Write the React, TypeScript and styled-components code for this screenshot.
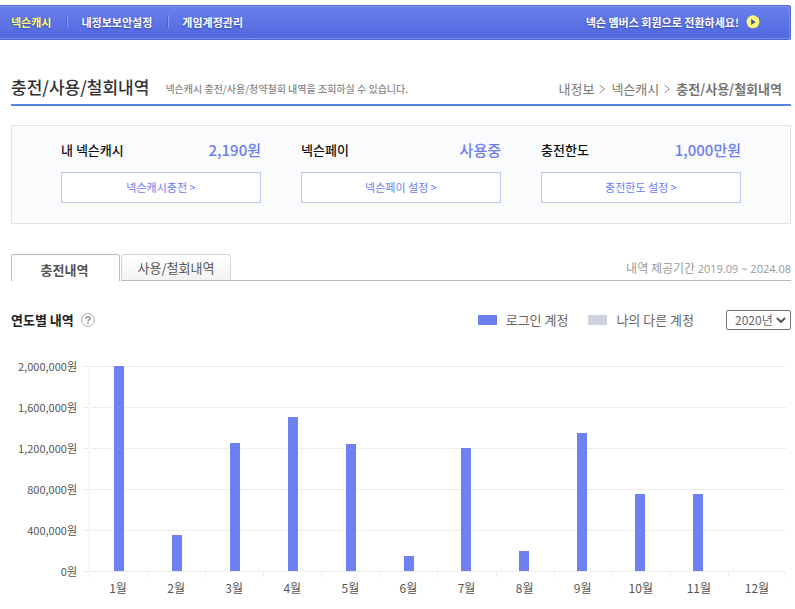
import React from 'react';
import styled, { createGlobalStyle } from 'styled-components';

const GlobalStyle = createGlobalStyle`
  *, *::before, *::after { box-sizing: border-box; }
  body {
    margin: 0;
    background: #fff;
    color: #666;
    font-family: "Noto Sans CJK KR", "Liberation Sans", sans-serif;
    font-size: 13px;
    line-height: 20px;
  }
  a { color: inherit; text-decoration: none; }
  h1, h2, h3, p, ul, ol { margin: 0; padding: 0; }
  ul, ol { list-style: none; }
  button, select { font-family: inherit; cursor: pointer; }
`;

const Page = styled.div`
  padding: 5px 4px 10px 0;
`;

const NavBar = styled.nav`
  display: flex;
  align-items: center;
  justify-content: space-between;
  height: 35px;
  padding: 0 30px 2px 11px;
  border: solid #5068d8;
  border-width: 1px 1px 1px 0;
  border-radius: 0 2px 2px 0;
  background: linear-gradient(#687feb, #5268df);
  box-shadow: inset 0 1px 0 #7a92f0, inset -1px -1px 0 #7389ee;
  color: #fff;
  font-size: 11px;
  font-weight: 700;
  text-shadow: 0 1px 2px #3446a8;
`;

const NavList = styled.ul`
  display: flex;
  align-items: center;
`;

const NavItem = styled.li<{ $active?: boolean }>`
  display: flex;
  align-items: center;
  color: ${(p) => (p.$active ? '#ffff66' : '#fff')};

  &:not(:first-child)::before {
    content: '';
    width: 2px;
    height: 13px;
    margin: 0 13px 0 15px;
    border-left: 1px solid #4a62d4;
    background: #7d9cf8;
  }
`;

const MemberLink = styled.a`
  display: flex;
  align-items: center;
  gap: 7px;
`;

const Content = styled.main`
  padding-left: 11px;
`;

const PageHeader = styled.header`
  display: flex;
  align-items: center;
  height: 66px;
  padding: 30px 9px 0 0;
  border-bottom: 2px solid #5a84e2;
`;

const PageTitle = styled.h1`
  color: #333;
  font-size: 17px;
  font-weight: 500;
  line-height: 24px;
  white-space: nowrap;
`;

const PageNote = styled.p`
  margin: 4px 0 0 16px;
  color: #888;
  font-size: 10px;
  font-weight: 500;
  white-space: nowrap;
`;

const Breadcrumb = styled.ol`
  display: flex;
  gap: 5px;
  margin: 4px 0 0 auto;
  color: #777;
  white-space: nowrap;
`;

const Crumb = styled.li<{ $current?: boolean }>`
  display: flex;
  align-items: center;
  gap: 4px;
  font-weight: ${(p) => (p.$current ? 700 : 400)};
`;

const Summary = styled.section`
  display: grid;
  grid-template-columns: repeat(3, 1fr);
  gap: 40px;
  margin-top: 19px;
  padding: 12px 49px 20px;
  border: 1px solid #e2e3e6;
  background: #fafbfd;
`;

const SummaryHead = styled.div`
  display: flex;
  align-items: center;
  justify-content: space-between;
  height: 24px;
  margin-bottom: 10px;
`;

const SummaryTitle = styled.h2`
  color: #111;
  font-size: 13px;
  font-weight: 500;
`;

const SummaryValue = styled.strong`
  color: #6b7df0;
  font-size: 15px;
  font-weight: 500;
`;

const SummaryButton = styled.button`
  display: block;
  width: 100%;
  height: 31px;
  padding: 0 0 2px;
  border: 1px solid #bfc6ef;
  background: #fff;
  color: #6b7df0;
  font-size: 11px;
  line-height: 20px;
`;

const TabRow = styled.div`
  display: flex;
  align-items: flex-end;
  height: 27px;
  margin-top: 30px;
`;

const TabList = styled.div`
  display: flex;
  height: 100%;
`;

const Tab = styled.button<{ $active?: boolean }>`
  width: ${(p) => (p.$active ? '109px' : '110px')};
  padding: ${(p) => (p.$active ? '3px 2px 0 0' : '0')};
  border: 1px solid ${(p) => (p.$active ? '#bbb' : '#d4d4d4')};
  border-bottom: ${(p) => (p.$active ? '0' : '1px solid #bbb')};
  border-radius: 3px 3px 0 0;
  background: ${(p) => (p.$active ? '#fff' : 'linear-gradient(#fff, #f3f3f3)')};
  color: #555;
  font-size: 13px;
  font-weight: ${(p) => (p.$active ? 700 : 400)};
  line-height: 20px;

  &:not(:first-child) { margin-left: 1px; }
`;

const Period = styled.p`
  flex: 1;
  height: 100%;
  padding-top: 4px;
  border-bottom: 1px solid #bbb;
  color: #999;
  font-size: 12px;
  text-align: right;
`;

const PeriodDates = styled.span`
  font-family: "Open Sans", sans-serif;
  font-size: 11px;
`;

const ChartHeader = styled.div`
  display: flex;
  align-items: center;
  margin-top: 29px;
`;

const ChartTitle = styled.h2`
  color: #222;
  font-size: 13px;
  font-weight: 700;
`;

const HelpButton = styled.button`
  display: flex;
  margin-left: 7px;
  padding: 0;
  border: 0;
  background: none;
`;

const Legend = styled.ul`
  display: flex;
  gap: 20px;
  margin-left: auto;
`;

const LegendItem = styled.li<{ $color: string }>`
  display: flex;
  align-items: center;
  gap: 9px;
  color: #666;

  &::before {
    content: '';
    width: 19px;
    height: 10px;
    background: ${(p) => p.$color};
  }
`;

const YearField = styled.label`
  display: grid;
  align-items: center;
  width: 65px;
  margin-left: 32px;
`;

const YearSelect = styled.select`
  grid-area: 1 / 1;
  appearance: none;
  width: 100%;
  height: 20px;
  padding: 0 0 0 8px;
  border: 1px solid #767676;
  border-radius: 2px;
  background: #fff;
  color: #666;
  font-size: 12px;
  line-height: 18px;
`;

const SelectArrow = styled.svg`
  grid-area: 1 / 1;
  justify-self: end;
  margin-right: 5px;
  pointer-events: none;
`;

const Chart = styled.section`
  display: grid;
  grid-template-columns: 66px 1fr;
  column-gap: 6px;
  margin-top: 26px;
  padding-right: 5px;
  color: #555;
`;

const AmountAxis = styled.ul`
  display: flex;
  flex-direction: column;
  justify-content: space-between;
  height: 225px;
  font-size: 11px;
  text-align: right;
`;

const Plot = styled.div`
  display: grid;
  grid-template-rows: 206px auto;
  padding-top: 10px;
`;

const GridLines = styled.div`
  grid-area: 1 / 1;
  background: repeating-linear-gradient(#ededed 0 1px, transparent 1px 41px);
`;

const Bars = styled.div`
  grid-area: 1 / 1;
  display: grid;
  grid-template-columns: repeat(12, 1fr);
  align-items: end;
  justify-items: center;
  margin: 0 1px 0 5px;
  padding-bottom: 1px;
  border-left: 2px solid #f6f6f6;
`;

const Bar = styled.div`
  width: 10px;
  background: #6e80f2;
`;

const Months = styled.ol`
  display: grid;
  grid-template-columns: repeat(12, 1fr);
  margin-left: 6px;
  font-size: 12px;
  text-align: center;
`;

const Month = styled.li`
  display: flex;
  flex-direction: column;

  &::before {
    content: '';
    height: 5px;
    margin-bottom: 1px;
    border-left: 1px solid #ededed;
  }

  &:last-child::before { border-right: 1px solid #ededed; }
`;

const navItems = ['넥슨캐시', '내정보보안설정', '게임계정관리'];

const summaries = [
  { title: '내 넥슨캐시', value: '2,190원', action: '넥슨캐시충전 >' },
  { title: '넥슨페이', value: '사용중', action: '넥슨페이 설정 >' },
  { title: '충전한도', value: '1,000만원', action: '충전한도 설정 >' },
];

const MAX_AMOUNT = 2000000;
const amounts = [2000000, 1600000, 1200000, 800000, 400000, 0];
const monthly = [
  2000000, 350000, 1250000, 1500000, 1240000, 150000,
  1200000, 200000, 1350000, 750000, 750000, 0,
];

const Chevron = () => (
  <svg width="8" height="10" viewBox="0 0 8 10" aria-hidden="true">
    <path d="M1.5 1L6.5 5L1.5 9" fill="none" stroke="#888" />
  </svg>
);

export default function App() {
  return (
    <>
      <GlobalStyle />
      <Page>
        <NavBar>
          <NavList>
            {navItems.map((item, i) => (
              <NavItem key={item} $active={i === 0}>
                <a href="#">{item}</a>
              </NavItem>
            ))}
          </NavList>
          <MemberLink href="#">
            넥슨 멤버스 회원으로 전환하세요!
            <svg width="14" height="14" viewBox="0 0 14 14" aria-hidden="true">
              <circle cx="7" cy="7.5" r="6.5" fill="#3f51b5" opacity="0.5" />
              <circle cx="7" cy="6.8" r="6.5" fill="#fdf67c" />
              <path d="M5.2 4L9.7 7L5.2 10Z" fill="#4a5590" />
            </svg>
          </MemberLink>
        </NavBar>
        <Content>
          <PageHeader>
            <PageTitle>충전/사용/철회내역</PageTitle>
            <PageNote>넥슨캐시 충전/사용/청약철회 내역을 조회하실 수 있습니다.</PageNote>
            <Breadcrumb>
              <Crumb><a href="#">내정보</a><Chevron /></Crumb>
              <Crumb><a href="#">넥슨캐시</a><Chevron /></Crumb>
              <Crumb $current>충전/사용/철회내역</Crumb>
            </Breadcrumb>
          </PageHeader>

          <Summary>
            {summaries.map((s) => (
              <div key={s.title}>
                <SummaryHead>
                  <SummaryTitle>{s.title}</SummaryTitle>
                  <SummaryValue>{s.value}</SummaryValue>
                </SummaryHead>
                <SummaryButton type="button">{s.action}</SummaryButton>
              </div>
            ))}
          </Summary>

          <TabRow>
            <TabList role="tablist">
              <Tab type="button" role="tab" aria-selected="true" $active>충전내역</Tab>
              <Tab type="button" role="tab" aria-selected="false">사용/철회내역</Tab>
            </TabList>
            <Period>
              내역 제공기간 <PeriodDates>2019.09 ~ 2024.08</PeriodDates>
            </Period>
          </TabRow>

          <ChartHeader>
            <ChartTitle>연도별 내역</ChartTitle>
            <HelpButton type="button" aria-label="도움말">
              <svg width="14" height="14" viewBox="0 0 14 14" aria-hidden="true">
                <circle cx="7" cy="7" r="6.4" fill="#fff" stroke="#aaa" />
                <path
                  d="M4.8 5.6C4.8 3 9.2 3 9.2 5.4C9.2 6.8 7 6.8 7 8.4M7 9.6V11"
                  fill="none"
                  stroke="#888"
                  strokeWidth="1.4"
                />
              </svg>
            </HelpButton>
            <Legend>
              <LegendItem $color="#6e80f2">로그인 계정</LegendItem>
              <LegendItem $color="#d0d2e0">나의 다른 계정</LegendItem>
            </Legend>
            <YearField>
              <YearSelect aria-label="연도" defaultValue="2020">
                <option value="2020">2020년</option>
              </YearSelect>
              <SelectArrow width="10" height="6" viewBox="0 0 10 6" aria-hidden="true">
                <path d="M1 1L5 5L9 1" fill="none" stroke="#555" strokeWidth="2" />
              </SelectArrow>
            </YearField>
          </ChartHeader>

          <Chart>
            <AmountAxis>
              {amounts.map((a) => (
                <li key={a}>{a.toLocaleString('en-US')}원</li>
              ))}
            </AmountAxis>
            <Plot>
              <GridLines />
              <Bars>
                {monthly.map((amount, i) => (
                  <Bar key={i} style={{ height: `${(amount / MAX_AMOUNT) * 100}%` }} />
                ))}
              </Bars>
              <Months>
                {monthly.map((_, i) => (
                  <Month key={i}>{i + 1}월</Month>
                ))}
              </Months>
            </Plot>
          </Chart>
        </Content>
      </Page>
    </>
  );
}
